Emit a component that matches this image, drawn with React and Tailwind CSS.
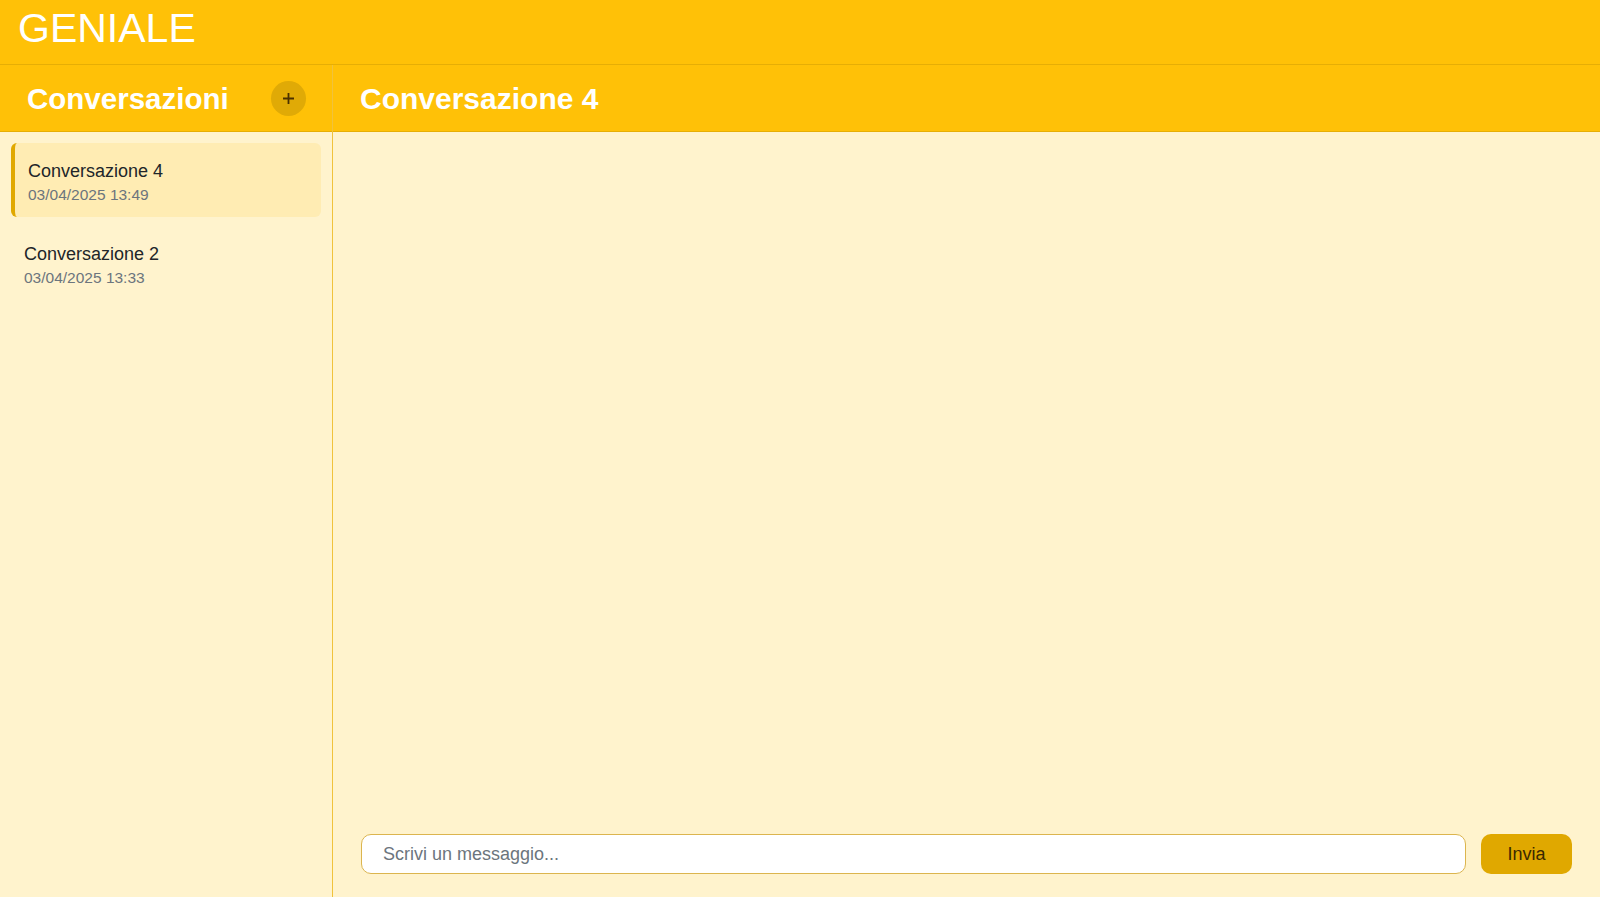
import React, { useState } from "react";

const conversations = [
  { id: 4, title: "Conversazione 4", date: "03/04/2025 13:49" },
  { id: 2, title: "Conversazione 2", date: "03/04/2025 13:33" },
];

const App = () => {
  const [activeId, setActiveId] = useState(4);
  const [text, setText] = useState("");
  const active = conversations.find((c) => c.id === activeId);

  return (
      <div className="h-screen flex flex-col bg-[#fff3cd] font-['Liberation_Sans',Arial,sans-serif] overflow-hidden">
        <header className="h-[65px] shrink-0 bg-[#ffc107] border-b border-[#e6ae05] px-[18px] pt-2">
          <h1 className="text-[41px] leading-none text-white">GENIALE</h1>
        </header>

        <div className="flex flex-1 min-h-0">
          {/* sidebar */}
          <aside className="w-[333px] shrink-0 flex flex-col border-r border-[#f0c23c]">
            <div className="h-[67px] shrink-0 flex items-center justify-between bg-[#ffc107] border-b border-[#e6ae05] pl-[27px] pr-[26px]">
              <h2 className="text-[29.5px] leading-9 pt-[2px] font-bold text-white">Conversazioni</h2>
              <button className="w-[35px] h-[35px] rounded-full bg-[#e0aa06] flex items-center justify-center text-[#4a3000]">
                <svg width="13" height="13" viewBox="0 0 13 13" stroke="currentColor" strokeWidth="1.8">
                  <path d="M6.5 1v11M1 6.5h11" />
                </svg>
              </button>
            </div>

            <div className="flex flex-col gap-[9px] p-[11px]">
              {conversations.map((c) =>
                  c.id === activeId ? (
                      <div
                          key={c.id}
                          onClick={() => setActiveId(c.id)}
                          className="cursor-pointer rounded-md bg-[#ffecb3] border-l-4 border-[#e0a800] pl-[13px] pr-3 pt-[14px] pb-3"
                      >
                        <p className="text-[18px] leading-7 text-[#212529]">{c.title}</p>
                        <p className="text-[15.5px] leading-5 text-[#6c757d]">{c.date}</p>
                      </div>
                  ) : (
                      <div
                          key={c.id}
                          onClick={() => setActiveId(c.id)}
                          className="cursor-pointer rounded-md pl-[13px] pr-3 pt-[14px] pb-3"
                      >
                        <p className="text-[18px] leading-7 text-[#212529]">{c.title}</p>
                        <p className="text-[15.5px] leading-5 text-[#6c757d]">{c.date}</p>
                      </div>
                  )
              )}
            </div>
          </aside>

          {/* main */}
          <main className="flex-1 flex flex-col min-w-0">
            <div className="h-[67px] shrink-0 flex items-center bg-[#ffc107] border-b border-[#e6ae05] px-[27px]">
              <h2 className="text-[30px] font-bold text-white">{active?.title}</h2>
            </div>

            <div className="flex-1" />

            <div className="flex items-center gap-[15px] px-7 pb-[23px]">
              <input
                  value={text}
                  onChange={(e) => setText(e.target.value)}
                  placeholder="Scrivi un messaggio..."
                  className="flex-1 h-10 rounded-[10px] bg-white border border-[#dcb54e] px-[21px] text-[18px] text-[#212529] placeholder:text-[#6c757d] outline-none"
              />
              <button className="w-[91px] h-10 rounded-[10px] bg-[#e0a800] text-[18px] text-[#3b2800]">
                Invia
              </button>
            </div>
          </main>
        </div>
      </div>
  );
};

export default App;
